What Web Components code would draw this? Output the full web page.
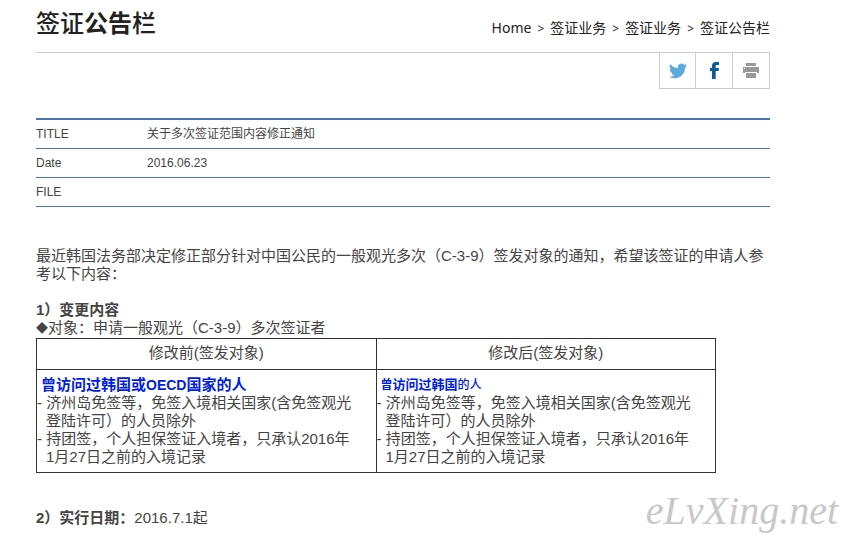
<!DOCTYPE html>
<html lang="zh-CN">
<head>
<meta charset="utf-8">
<meta name="viewport" content="width=device-width, initial-scale=1">
<title>签证公告栏</title>
<style>
    body {
        margin: 0;
        background: #fff;
        color: #444;
        font: 15px/18px "Liberation Sans", "Noto Sans CJK SC", sans-serif;
    }
</style>
</head>
<body>
<notice-page>
    <page-header slot="header"></page-header>
    <share-bar slot="share"></share-bar>
    <notice-info slot="info"></notice-info>
    <notice-article></notice-article>
    <site-mark slot="mark">eLvXing.net</site-mark>
</notice-page>

<script>
class NoticePage extends HTMLElement {
    constructor() {
        super()
        this.attachShadow({ mode: 'open' }).innerHTML = `
        <style>
            :host {
                display: block;
                position: relative;
            }
            main {
                max-width: 734px;
                padding: 0 80px 16px 36px;
            }
        </style>
        <main>
            <slot name="header"></slot>
            <slot name="share"></slot>
            <slot name="info"></slot>
            <slot></slot>
        </main>
        <slot name="mark"></slot>
        `
    }
}

class PageHeader extends HTMLElement {
    constructor() {
        super()
        this.attachShadow({ mode: 'open' }).innerHTML = `
        <style>
            :host {
                display: flex;
                justify-content: space-between;
                align-items: center;
                height: 52px;
                border-bottom: 1px solid #ccc;
                color: #222;
            }
            h1 {
                margin: 0;
                padding-bottom: 4px;
                font-size: 24px;
                line-height: 32px;
                font-weight: 500;
            }
            nav {
                padding-top: 4px;
                font: 14px/20px "Noto Sans", "Noto Sans CJK SC", sans-serif;
            }
            ol {
                display: flex;
                gap: 6px;
                margin: 0;
                padding: 0;
                list-style: none;
            }
            li + li::before {
                content: '>';
                margin-right: 6px;
                font-size: 12px;
            }
            a {
                color: inherit;
                text-decoration: none;
            }
        </style>
        <h1>签证<b>公告</b>栏</h1>
        <nav aria-label="breadcrumb">
            <ol>
                <li><a href="#">Home</a></li>
                <li><a href="#">签证业务</a></li>
                <li><a href="#">签证业务</a></li>
                <li><a href="#">签证公告栏</a></li>
            </ol>
        </nav>
        `
    }
}

class ShareBar extends HTMLElement {
    constructor() {
        super()
        this.attachShadow({ mode: 'open' }).innerHTML = `
        <style>
            :host {
                display: flex;
                justify-content: flex-end;
                margin-bottom: 29px;
            }
            a, button {
                box-sizing: border-box;
                display: flex;
                justify-content: center;
                align-items: center;
                width: 37px;
                height: 36px;
                padding: 0;
                border: 1px solid #ccc;
                border-width: 0 1px 1px 0;
                background: #fff;
            }
            a:first-of-type {
                border-left-width: 1px;
            }
            svg {
                display: block;
            }
        </style>
        <a href="#" aria-label="Twitter">
            <svg width="18" height="18" viewBox="0 0 24 24" fill="#5ea9dd"><path d="M23.95 4.57a10 10 0 0 1-2.82.77 4.96 4.96 0 0 0 2.16-2.72c-.95.55-2 .95-3.13 1.18a4.92 4.92 0 0 0-8.38 4.48A13.98 13.98 0 0 1 1.64 3.16a4.92 4.92 0 0 0 1.52 6.57 4.9 4.9 0 0 1-2.23-.61v.06a4.92 4.92 0 0 0 3.95 4.83 5 5 0 0 1-2.21.08 4.94 4.94 0 0 0 4.6 3.42A9.87 9.87 0 0 1 0 19.54a14 14 0 0 0 7.55 2.21c9.05 0 14-7.5 14-13.98 0-.21 0-.42-.02-.63a9.94 9.94 0 0 0 2.46-2.55z"/></svg>
        </a>
        <a href="#" aria-label="Facebook">
            <svg width="9" height="17" viewBox="0 0 9 17" fill="#0b5c98"><path d="M2 17V9H0V6h2V4c0-2.700 1.300-4 4-4h3v3H7c-1 0-1.300.4-1.300 1.300V6H9l-.4 3H5.700v8z"/></svg>
        </a>
        <button type="button" aria-label="Print">
            <svg width="16" height="15" viewBox="0 0 16 15" fill="#999"><path d="M3 0h10v3H3zM0 4h16v6h-2V9H2v1H0zM3 10h10v5H3z"/><path d="M1 5h1v1H1z" fill="#fff"/></svg>
        </button>
        `
    }
}

class NoticeInfo extends HTMLElement {
    constructor() {
        super()
        this.attachShadow({ mode: 'open' }).innerHTML = `
        <style>
            :host {
                display: block;
                margin-bottom: 40px;
                border-top: 2px solid #4c74b5;
            }
            table {
                width: 100%;
                border-collapse: collapse;
                font-size: 12px;
                line-height: 16px;
            }
            th, td {
                height: 28px;
                padding: 0;
                border-bottom: 1px solid #4c74b5;
                font-weight: normal;
                text-align: left;
            }
            th {
                width: 111px;
            }
        </style>
        <table>
            <tr><th scope="row">TITLE</th><td>关于多次签证范围内容修正通知</td></tr>
            <tr><th scope="row">Date</th><td>2016.06.23</td></tr>
            <tr><th scope="row">FILE</th><td></td></tr>
        </table>
        `
    }
}

class NoticeArticle extends HTMLElement {
    constructor() {
        super()
        this.attachShadow({ mode: 'open' }).innerHTML = `
        <style>
            :host {
                display: block;
            }
            p, h2 {
                margin: 0;
            }
            h2 {
                margin-top: 18px;
                font-size: 15px;
                line-height: 18px;
            }
            .date {
                margin-top: 36px;
            }
            .mark {
                font-size: 12px;
            }
        </style>
        <p>最近韩国法务部决定修正部分针对中国公民的一般观光多次（C-3-9）签发对象的通知，希望该签证的申请人参考以下内容：</p>
        <h2>1）变更内容</h2>
        <p><span class="mark">◆</span>对象：申请一般观光（C-3-9）多次签证者</p>
        <change-table></change-table>
        <p class="date"><b>2）实行日期：</b>2016.7.1起</p>
        `
    }
}

class ChangeTable extends HTMLElement {
    constructor() {
        super()
        const rules = `
            <ul>
                <li>- 济州岛免签等，免签入境相关国家(含免签观光<br>登陆许可）的人员除外</li>
                <li>- 持团签，个人担保签证入境者，只承认2016年<br>1月27日之前的入境记录</li>
            </ul>`
        this.attachShadow({ mode: 'open' }).innerHTML = `
        <style>
            :host {
                display: block;
                max-width: 680px;
            }
            table {
                width: 100%;
                table-layout: fixed;
                border-collapse: collapse;
            }
            th, td {
                border: 1px solid #333;
                padding: 0;
                text-align: left;
                vertical-align: top;
            }
            th {
                padding: 5px 0 7px;
                font-weight: normal;
                text-align: center;
            }
            td {
                padding: 6px 0;
            }
            .who {
                margin: 0;
                padding-left: 4px;
                color: #0020e0;
                font-weight: bold;
            }
            .latin {
                font-size: 14px;
            }
            .small {
                font-size: 13px;
            }
            .small span {
                font-size: 12px;
            }
            .small .light {
                font-weight: 500;
            }
            ul {
                margin: 0;
                padding: 0;
                list-style: none;
            }
            li {
                padding-left: 9px;
                text-indent: -9px;
                line-height: 18px;
            }
        </style>
        <table>
            <tr>
                <th scope="col">修改前(签发对象)</th>
                <th scope="col">修改后(签发对象)</th>
            </tr>
            <tr>
                <td><p class="who">曾访问过韩国或<span class="latin">OECD</span>国家的人</p>${rules}</td>
                <td><p class="who small"><span>曾</span>访问过韩国<span class="light">的人</span></p>${rules}</td>
            </tr>
        </table>
        `
    }
}

class SiteMark extends HTMLElement {
    constructor() {
        super()
        this.attachShadow({ mode: 'open' }).innerHTML = `
        <style>
            :host {
                position: absolute;
                right: 12px;
                bottom: 8px;
                color: #c8c8c8;
                font: italic 40px/48px "Liberation Serif", cursive;
            }
        </style>
        <slot></slot>
        `
    }
}

customElements.define('notice-page', NoticePage)
customElements.define('page-header', PageHeader)
customElements.define('share-bar', ShareBar)
customElements.define('notice-info', NoticeInfo)
customElements.define('change-table', ChangeTable)
customElements.define('notice-article', NoticeArticle)
customElements.define('site-mark', SiteMark)
</script>
</body>
</html>
